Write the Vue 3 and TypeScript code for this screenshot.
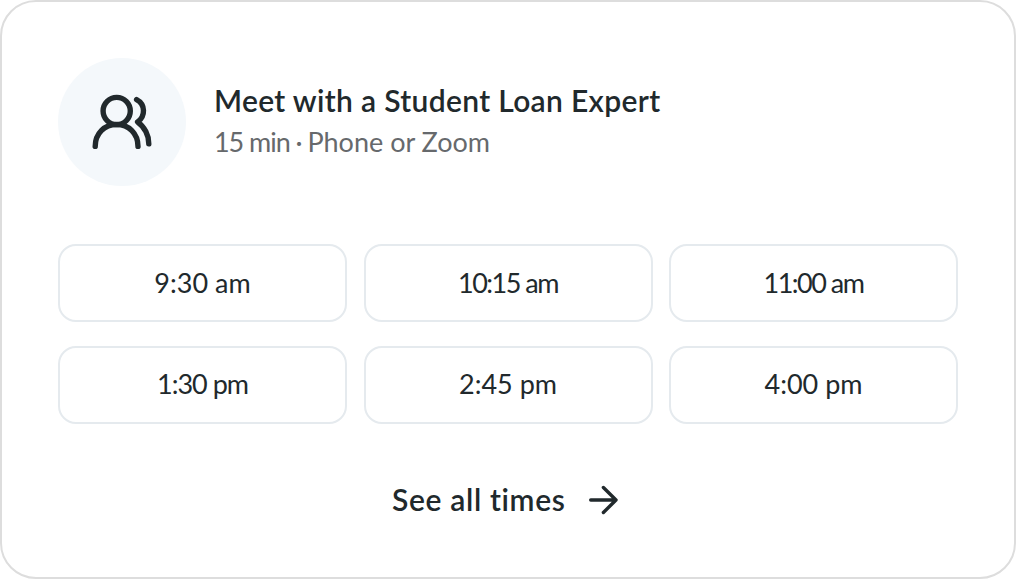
<script setup lang="ts">
interface Slot {
  label: string
  tracking: string
}

const slots: Slot[] = [
  { label: '9:30 am', tracking: 'normal' },
  { label: '10:15 am', tracking: 'tighter' },
  { label: '11:00 am', tracking: 'tighter' },
  { label: '1:30 pm', tracking: 'tight' },
  { label: '2:45 pm', tracking: 'normal' },
  { label: '4:00 pm', tracking: 'normal' },
]
</script>

<template>
  <main class="card">
    <header class="header">
      <div class="avatar">
        <svg width="128" height="128" viewBox="58 58 128 128" aria-hidden="true">
          <circle cx="116.7" cy="111" r="13.6" />
          <path d="M95.2 146.4C95.2 133.5 104.4 124.5 116.6 124.5S138 133.5 138 146.4" />
          <path d="M136.6 99.6C145.5 104.3 145.7 116.2 137.6 122C144.5 126.8 149 135.5 148.8 143.9" />
        </svg>
      </div>
      <div class="heading">
        <h1 class="title">Meet with a Student Loan Expert</h1>
        <p class="details"><span class="duration">15 min · </span>Phone or Zoom</p>
      </div>
    </header>

    <div class="slots">
      <button v-for="slot in slots" :key="slot.label" type="button" class="slot" :class="slot.tracking">
        {{ slot.label }}
      </button>
    </div>

    <button type="button" class="more">
      <span>See all times</span>
      <svg width="30" height="30" viewBox="0 0 30 30" aria-hidden="true">
        <path d="M2.7 15H28M15.4 2.5L28 15L15.4 27.5" />
      </svg>
    </button>
  </main>
</template>

<style>
body {
  background: #fff;
}
</style>

<style scoped>
.card {
  box-sizing: border-box;
  width: 1016px;
  height: 579px;
  padding: 56px;
  border: 2px solid #ddd;
  border-radius: 36px;
  background: #fff;
  color: #21292c;
  font-family: Lato, "Liberation Sans", sans-serif;
}

.header {
  display: flex;
  align-items: center;
  gap: 28px;
  height: 128px;
}

.avatar {
  width: 128px;
  height: 128px;
  border-radius: 50%;
  background: #f4f8fb;
}

svg {
  display: block;
  fill: none;
  stroke: #21292c;
  stroke-linecap: round;
  stroke-linejoin: round;
}

.avatar svg {
  stroke-width: 5.4;
}

.heading {
  padding-bottom: 2px;
}

.title,
.details {
  margin: 0;
  white-space: nowrap;
}

.title {
  font-size: 30px;
  line-height: 42px;
  font-weight: 600;
  letter-spacing: 0.33px;
}

.details {
  color: #66696c;
  font-size: 27px;
  line-height: 42px;
}

.duration {
  letter-spacing: -1.05px;
}

.slots {
  display: grid;
  grid-template-columns: repeat(3, 289px);
  grid-auto-rows: 78px;
  justify-content: space-between;
  row-gap: 23.5px;
  margin-top: 58px;
}

.slot {
  padding: 0 0 1px;
  border: 2px solid #e5eaee;
  border-radius: 18px;
  background: #fff;
  color: inherit;
  font: 400 27px/40px Lato, "Liberation Sans", sans-serif;
}

.tight {
  letter-spacing: -1px;
}

.tighter {
  letter-spacing: -1.5px;
}

.more {
  display: flex;
  align-items: center;
  gap: 22px;
  width: max-content;
  margin: 54.5px 0 0 334px;
  padding: 0;
  border: 0;
  background: none;
  color: inherit;
  font: 600 30px/42px Lato, "Liberation Sans", sans-serif;
  letter-spacing: 0.65px;
}

.more span {
  padding-bottom: 2px;
}

.more svg {
  stroke-width: 3.4;
}
</style>
